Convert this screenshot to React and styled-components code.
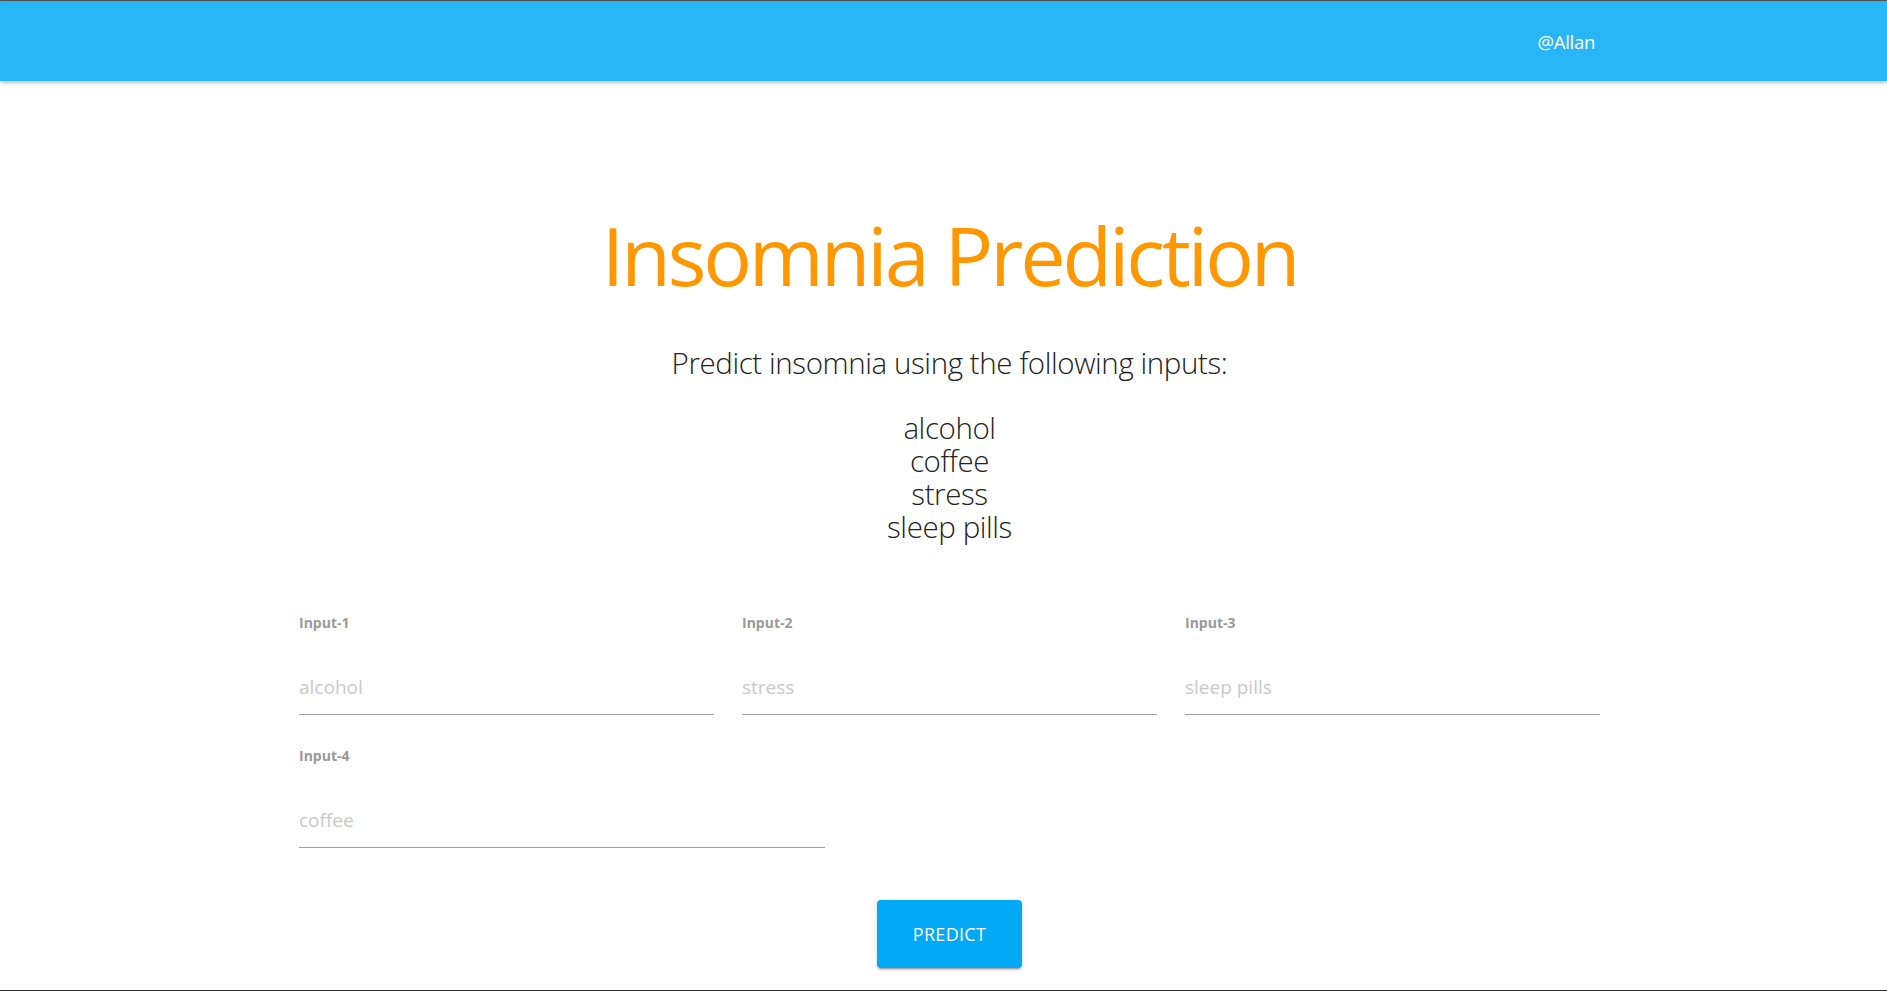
import React from 'react';
import styled, { createGlobalStyle } from 'styled-components';

const Global = createGlobalStyle`
  html, body {
    margin: 0;
    padding: 0;
    background: #fff;
    font-family: "Open Sans", "Noto Sans", "Liberation Sans", sans-serif;
  }
  * { box-sizing: border-box; }
`;

const Page = styled.div`
  min-height: 100vh;
  border-top: 1px solid #555;
  border-bottom: 1px solid #2b2b2b;
  display: flex;
  flex-direction: column;
`;

const Header = styled.header`
  height: 80px;
  background: #29b6f6;
  box-shadow: 0 2px 4px rgba(0, 0, 0, 0.25);
  display: flex;
  align-items: center;
  justify-content: flex-end;
  padding: 0 292px 0 0;
`;

const User = styled.span`
  color: #fff;
  font-size: 18.5px;
  letter-spacing: -0.3px;
`;

const Main = styled.main`
  flex: 1;
  display: flex;
  flex-direction: column;
  align-items: center;
  padding-left: 12px;
`;

const Title = styled.h1`
  margin: 121px 0 0;
  font-size: 81px;
  line-height: 106px;
  font-weight: 400;
  color: #ff9800;
  letter-spacing: -3.1px;
`;

const Subtitle = styled.p`
  margin: 37px 0 0;
  font-size: 29.5px;
  line-height: 36px;
  font-weight: 300;
  color: #222;
  letter-spacing: -0.4px;
`;

const List = styled.ul`
  list-style: none;
  margin: 30px 0 0;
  padding: 0;
  text-align: center;
`;

const Item = styled.li`
  font-size: 29.5px;
  line-height: 33px;
  font-weight: 300;
  color: #222;
  letter-spacing: -0.4px;
`;

const Form = styled.form`
  width: 1301px;
  margin-top: 70px;
  display: grid;
  grid-template-columns: repeat(3, 1fr);
  column-gap: 28px;
  row-gap: 31px;
`;

const Field = styled.label`
  display: flex;
  flex-direction: column;
  grid-column: ${p => (p.$wide ? '1 / span 2' : 'auto')};
  width: ${p => (p.$wide ? '526px' : 'auto')};
`;

const Label = styled.span`
  font-size: 14px;
  line-height: 20px;
  font-weight: 700;
  color: #999;
`;

const Input = styled.input`
  margin-top: 34px;
  height: 48px;
  padding: 0 0 8px;
  border: none;
  border-bottom: 1px solid #9e9e9e;
  outline: none;
  font-family: inherit;
  font-size: 19px;
  color: #333;
  background: transparent;
  &::placeholder {
    color: #c9c9c9;
  }
`;

const Button = styled.button`
  margin: 52px 0 20px;
  width: 145px;
  height: 68px;
  border: none;
  border-radius: 4px;
  background: #03a9f4;
  color: #fff;
  font-family: inherit;
  font-size: 18px;
  text-transform: uppercase;
  letter-spacing: 0.3px;
  box-shadow: 0 3px 1px -2px rgba(0, 0, 0, 0.2), 0 2px 2px 0 rgba(0, 0, 0, 0.14), 0 1px 5px 0 rgba(0, 0, 0, 0.12);
  cursor: pointer;
`;

const fields = [
  { label: 'Input-1', placeholder: 'alcohol' },
  { label: 'Input-2', placeholder: 'stress' },
  { label: 'Input-3', placeholder: 'sleep pills' },
  { label: 'Input-4', placeholder: 'coffee', wide: true },
];

export default function App() {
  return (
    <Page>
      <Global />
      <Header>
        <User>@Allan</User>
      </Header>
      <Main>
        <Title>Insomnia Prediction</Title>
        <Subtitle>Predict insomnia using the following inputs:</Subtitle>
        <List>
          <Item>alcohol</Item>
          <Item>coffee</Item>
          <Item>stress</Item>
          <Item>sleep pills</Item>
        </List>
        <Form onSubmit={e => e.preventDefault()}>
          {fields.map(f => (
            <Field key={f.label} $wide={f.wide}>
              <Label>{f.label}</Label>
              <Input placeholder={f.placeholder} />
            </Field>
          ))}
        </Form>
        <Button type="button">Predict</Button>
      </Main>
    </Page>
  );
}
